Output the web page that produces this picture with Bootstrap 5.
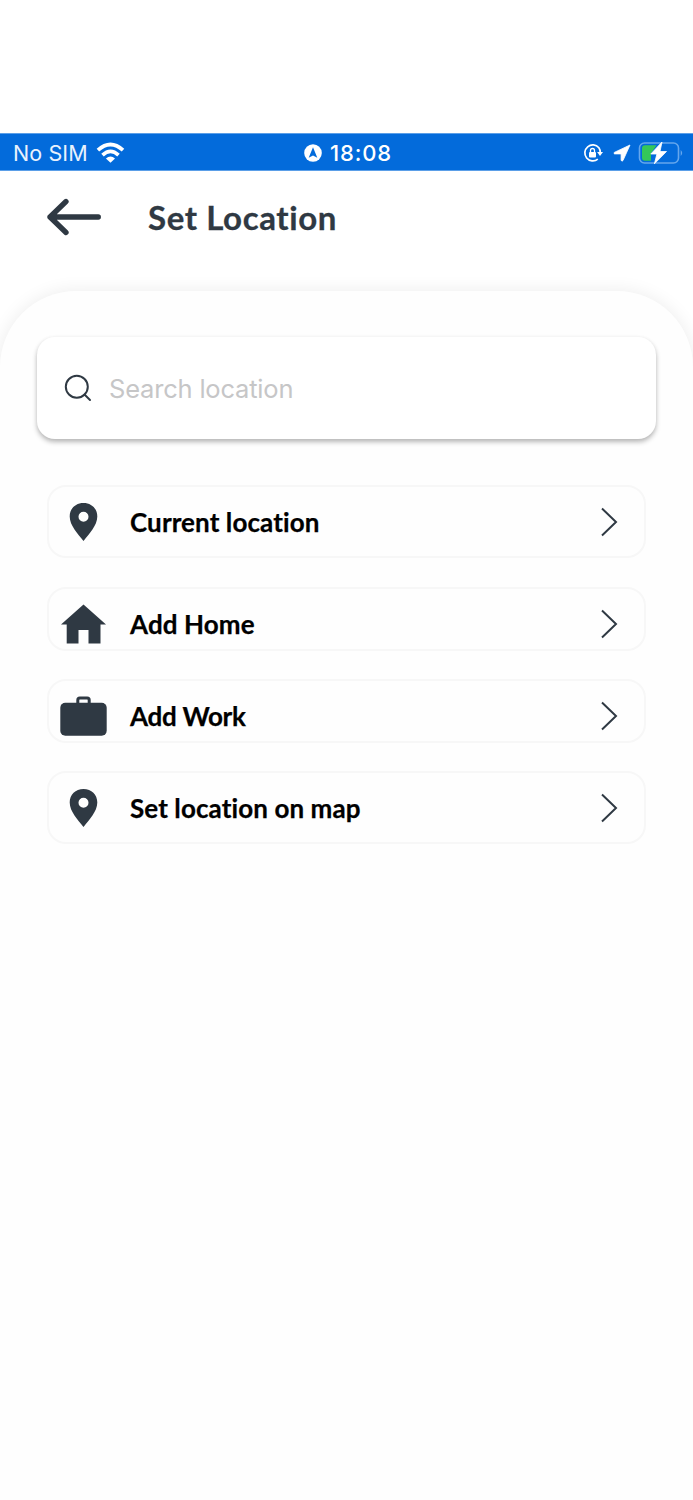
<!DOCTYPE html>
<html lang="en">
<head>
<meta charset="utf-8">
<meta name="viewport" content="width=device-width, initial-scale=1">
<title>Set Location</title>
<link href="https://cdn.jsdelivr.net/npm/bootstrap@5.3.0/dist/css/bootstrap.min.css" rel="stylesheet">
<style>
  body { font-family: Inter, "Liberation Sans", sans-serif; background: #fff; min-height: 1500px; overflow: hidden; padding-top: 133px; }
  svg { display: block; flex: none; }
  .status { height: 38px; background: #036bdb; border: solid #5b9fe8; border-width: 1px 0; color: #fff; padding: 1px 10px 0 13px; line-height: 36px; }
  .status > div { flex: 1 1 0; }
  .carrier { font-size: 21.5px; letter-spacing: .1px; color: #e9f2fd; }
  .clock { font-size: 22px; font-weight: 500; letter-spacing: .9px; }
  .topbar { height: 92px; padding-left: 46px; }
  .topbar h1 { font-family: Lato, sans-serif; font-weight: 700; font-size: 33px; line-height: 40px; letter-spacing: .6px; color: #2f3943; margin-left: 46px; -webkit-text-stroke: .3px #2f3943; }
  .panel { margin-top: 28px; height: 1209px; border-radius: 76px 76px 0 0; background: #fefefe; box-shadow: 0 0 18px rgba(0,0,0,.08); padding: 46px 37px 0; }
  .search { height: 102px; border-radius: 18px; background: #fff; box-shadow: 0 3px 5px rgba(0,0,0,.28), 0 0 4px rgba(0,0,0,.03); padding-left: 27px; }
  .search input { font-size: 25.5px; letter-spacing: -.2px; color: #2f3943; margin-left: 17px; padding: 0; height: 40px; }
  .search input::placeholder { color: #c6c6c7; opacity: 1; }
  .places { padding: 46px 10px 0; gap: 29px; }
  .place { height: 64px; border: 2px solid #f7f7f7; border-radius: 19px; background: #fefefe; padding: 9px 26px 0 11px; color: #000; text-decoration: none; }
  .place.tall { height: 73px; padding-top: 0; }
  .place + .place:not(.tall) + .place { margin-top: -1px; }
  .place span { font-family: Lato, sans-serif; font-weight: 700; font-size: 26px; line-height: 32px; margin-left: 22px; font-variant-ligatures: none; letter-spacing: .1px; -webkit-text-stroke: .25px #000; }
  .place .work { letter-spacing: -.25px; }
  .place .go { margin-left: auto; }
</style>
</head>
<body>
<header>
  <div class="status d-flex align-items-center">
    <div class="d-flex align-items-center">
      <span class="carrier">No SIM</span>
      <svg class="ms-2" width="30" height="22" viewBox="0 0 30 22" fill="none" stroke="#fff" stroke-width="3.7"><path d="M1.900 8.200Q14.500-3.200 27 8.200M6.500 13.100Q14.500 5.700 22.500 13.100"/><path d="M9.900 16.400Q14.500 12.600 19 16.400L14.500 20.700Z" fill="#fff" stroke="none"/></svg>
    </div>
    <div class="d-flex align-items-center justify-content-center">
      <svg width="18" height="18" viewBox="0 0 18 18"><circle cx="9" cy="9" r="8.800" fill="#fff"/><path d="M9 3.300L13.300 13.800 9 11.500 4.700 13.800Z" fill="#036bdb"/></svg>
      <span class="clock ms-2">18:08</span>
    </div>
    <div class="d-flex align-items-center justify-content-end">
      <svg width="20" height="20" viewBox="0 0 20 20" fill="none"><path d="M15.900 4.700A8 8 0 1 0 14.800 16.200M15.900 4.700Q17.300 6.800 17.300 9.500" stroke="#fff" stroke-width="1.700"/><path d="M14.100 9H20L17 13Z" fill="#fff"/><rect x="6" y="9" width="7" height="5.500" rx="1" fill="#fff"/><path d="M7.500 9V7.500a2 2 0 0 1 4 0V9" stroke="#fff" stroke-width="1.300"/></svg>
      <svg width="18" height="18" viewBox="0 0 18 18" style="margin-left:10px"><path d="M17 1L1.300 8.400Q.4 9.500 1.600 9.900H8.100V16.200Q8.800 17.900 10 16.500Z" fill="#fff" stroke="#fff" stroke-width=".8" stroke-linejoin="round"/></svg>
      <svg width="45" height="24" viewBox="0 0 45 24" style="margin-left:7px"><rect x="1.500" y="2" width="39" height="20" rx="5" fill="none" stroke="#65a7ed" stroke-width="1.600"/><path d="M42.700 9q3 3 0 6Z" fill="#65a7ed"/><path d="M7 4.300H18.500L13 12.500V19.700H7q-3 0-3-3V7.300q0-3 3-3Z" fill="#34c759"/><path d="M24 1L12.800 13H18.900L16.400 22.800 28.500 10.500H22Z" fill="#fff" stroke="#fff" stroke-width=".8" stroke-linejoin="round"/></svg>
    </div>
  </div>
  <div class="topbar d-flex align-items-center">
    <svg width="56" height="38" viewBox="0 0 56 38" fill="none" stroke="#2f3943" stroke-width="5.300" stroke-linecap="round" stroke-linejoin="round"><path d="M52.300 19H4M20 3.500L4 19 20 34.500"/></svg>
    <h1 class="mb-0">Set Location</h1>
  </div>
</header>
<main class="panel">
  <div class="search d-flex align-items-center">
    <svg width="28" height="28" viewBox="0 0 28 28" fill="none" stroke="#2f3943" stroke-width="2"><circle cx="12.800" cy="12.700" r="11"/><path d="M20.500 20.500L26 26" stroke-linecap="round"/></svg>
    <input class="form-control border-0 shadow-none bg-transparent" type="text" placeholder="Search location" aria-label="Search location">
  </div>
  <nav class="places d-flex flex-column">
    <a href="#" class="place tall d-flex align-items-center">
      <svg width="48" height="40" viewBox="0 0 48 40" fill="#2f3943"><path fill-rule="evenodd" d="M23.500 1C15.500 1 9.700 6.600 9.700 14.500 9.700 23.500 18 32 23.500 39 29 32 37.300 23.500 37.300 14.500 37.300 6.600 31.500 1 23.500 1ZM23.500 9.700a5 5 0 1 1 0 10 5 5 0 0 1 0-10Z"/></svg>
      <span>Current location</span>
      <svg class="go" width="17" height="30" viewBox="0 0 17 30" fill="none" stroke="#2f3943" stroke-width="2"><path d="M1 1.500L15 15 1 28.500"/></svg>
    </a>
    <a href="#" class="place d-flex align-items-center">
      <svg width="48" height="40" viewBox="0 0 48 40" fill="#2f3943"><path d="M23.500.6L46 20.500H40.500V39.500H28.500V26H18.500V39.500H6.700V20.500H1Z"/></svg>
      <span>Add Home</span>
      <svg class="go" width="17" height="30" viewBox="0 0 17 30" fill="none" stroke="#2f3943" stroke-width="2"><path d="M1 1.500L15 15 1 28.500"/></svg>
    </a>
    <a href="#" class="place d-flex align-items-center">
      <svg width="48" height="40" viewBox="0 0 48 40" fill="#2f3943"><rect x=".3" y="6.700" width="46.400" height="33" rx="5"/><path d="M17.800 8V4q0-2 2-2h7.400q2 0 2 2V8" fill="none" stroke="#2f3943" stroke-width="3"/></svg>
      <span class="work">Add Work</span>
      <svg class="go" width="17" height="30" viewBox="0 0 17 30" fill="none" stroke="#2f3943" stroke-width="2"><path d="M1 1.500L15 15 1 28.500"/></svg>
    </a>
    <a href="#" class="place tall d-flex align-items-center">
      <svg width="48" height="40" viewBox="0 0 48 40" fill="#2f3943"><path fill-rule="evenodd" d="M23.500 1C15.500 1 9.700 6.600 9.700 14.500 9.700 23.500 18 32 23.500 39 29 32 37.300 23.500 37.300 14.500 37.300 6.600 31.500 1 23.500 1ZM23.500 9.700a5 5 0 1 1 0 10 5 5 0 0 1 0-10Z"/></svg>
      <span>Set location on map</span>
      <svg class="go" width="17" height="30" viewBox="0 0 17 30" fill="none" stroke="#2f3943" stroke-width="2"><path d="M1 1.500L15 15 1 28.500"/></svg>
    </a>
  </nav>
</main>
<script src="https://cdn.jsdelivr.net/npm/bootstrap@5.3.0/dist/js/bootstrap.bundle.min.js"></script>
</body>
</html>
